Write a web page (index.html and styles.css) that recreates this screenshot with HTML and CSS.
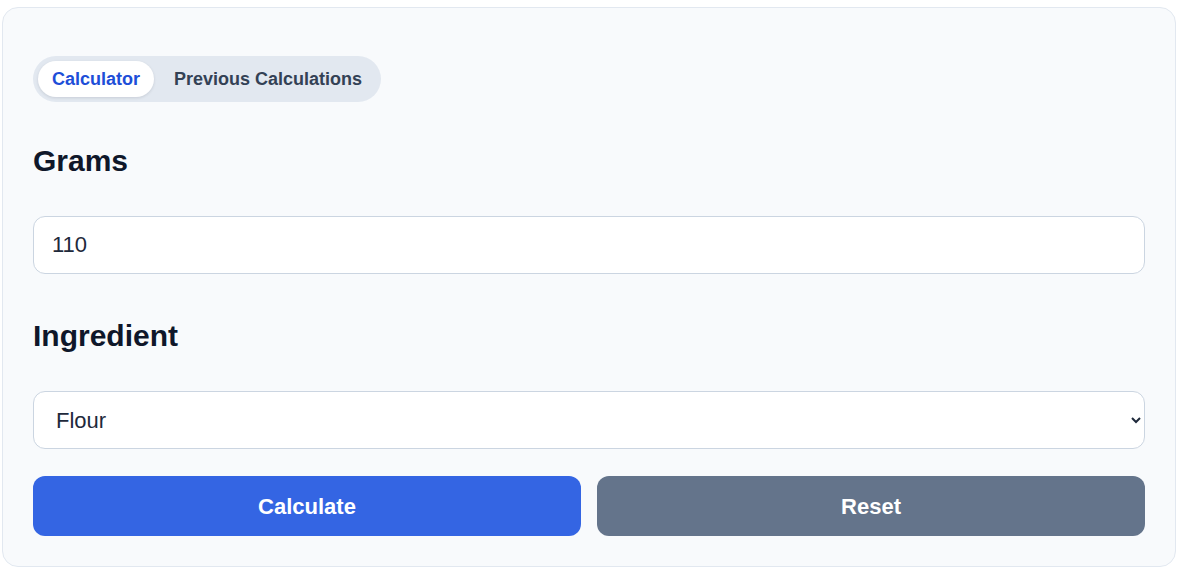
FILE: index.html
```html
<!DOCTYPE html>
<html lang="en">
<head>
<meta charset="utf-8">
<title>Grams Converter</title>
<link rel="stylesheet" href="styles.css">
</head>
<body>
<main class="card">
  <nav class="tabs">
    <button class="tab tab-active" type="button">Calculator</button>
    <button class="tab" type="button">Previous Calculations</button>
  </nav>
  <form class="form">
    <label class="label label-first" for="grams">Grams</label>
    <input class="field" id="grams" type="text" value="110">
    <label class="label" for="ingredient">Ingredient</label>
    <select class="field field-select" id="ingredient">
      <option>Flour</option>
      <option>Sugar</option>
      <option>Butter</option>
    </select>
    <div class="actions">
      <button class="btn btn-primary" type="button">Calculate</button>
      <button class="btn btn-secondary" type="button">Reset</button>
    </div>
  </form>
</main>
</body>
</html>
```
FILE: styles.css
```css
html, body {
  margin: 0;
  padding: 0;
  background: #ffffff;
}
body {
  font-family: "Liberation Sans", Arial, sans-serif;
  padding: 7px 6px 0 2px;
}
.card {
  box-sizing: border-box;
  background: #f8fafc;
  border: 1px solid #e2e8f0;
  border-radius: 16px;
  padding: 48px 30px 30px;
  display: flex;
  flex-direction: column;
  align-items: flex-start;
}
.tabs {
  display: inline-flex;
  gap: 6px;
  padding: 5px;
  background: #e2e8f0;
  border-radius: 23px;
}
.tab {
  font-family: inherit;
  font-size: 18px;
  line-height: 20px;
  font-weight: 700;
  color: #334155;
  background: transparent;
  border: 0;
  border-radius: 18px;
  padding: 8px 14px;
  cursor: pointer;
}
.tab-active {
  background: #ffffff;
  color: #1d4ed8;
  box-shadow: 0 1px 3px rgba(15, 23, 42, 0.12);
}
.form {
  align-self: stretch;
  display: flex;
  flex-direction: column;
}
.label {
  font-size: 30px;
  line-height: 34px;
  font-weight: 700;
  color: #0f172a;
  margin: 45px 0 38px;
}
.label-first {
  margin-top: 42px;
}
.field {
  box-sizing: border-box;
  height: 58px;
  width: 100%;
  font-family: inherit;
  font-size: 22px;
  color: #1e293b;
  background: #ffffff;
  border: 1px solid #cbd5e1;
  border-radius: 12px;
  padding: 0 18px;
  outline: none;
}
.field-select {
  padding: 0 10px 0 18px;
}
.actions {
  display: flex;
  gap: 16px;
  margin-top: 27px;
}
.btn {
  flex: 1;
  height: 60px;
  padding-top: 2px;
  font-family: inherit;
  font-size: 22px;
  font-weight: 700;
  color: #ffffff;
  border: 0;
  border-radius: 12px;
  cursor: pointer;
}
.btn-primary {
  background: #3465e3;
}
.btn-secondary {
  background: #64748b;
}
```
